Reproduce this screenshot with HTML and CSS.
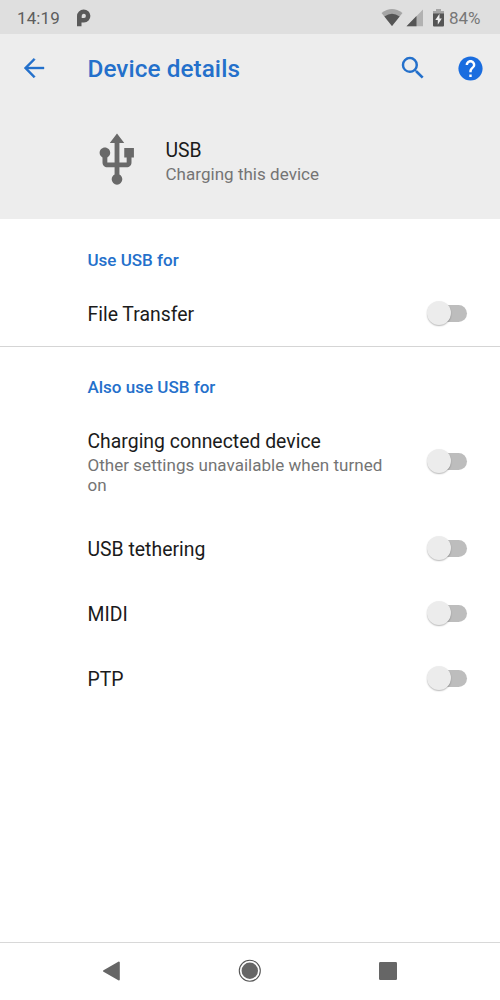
FILE: index.html
```
<!DOCTYPE html>
<html lang="en">
<head>
<meta charset="utf-8">
<title>Device details</title>
<link rel="stylesheet" href="styles.css">
</head>
<body>
<div class="screen">
  <div class="status">
    <span class="clock">14:19</span>
    <svg class="app-icon" width="14" height="18" viewBox="0 0 14 18"><path fill="#5a5a5a" fill-rule="evenodd" d="M0 17.3V7A6.700 6.500 0 1 1 7 13.500H4.500V17.300ZM4.700 9.100H7A2.100 2.200 0 1 0 4.700 7Z"/></svg>
    <div class="indicators">
      <svg class="wifi" width="22" height="18" viewBox="0 0 22 18"><path fill="#a5a5a5" d="M.5 4Q11-4 21.500 4L11 17Z"/><path fill="#555" d="M3.400 7.600Q11 2 18.600 7.600L11 17Z"/></svg>
      <svg class="signal" width="18" height="18" viewBox="0 0 18 18"><path fill="#b2b2b2" d="M.5 17.200 17 .5V17.200Z"/><path fill="#555" d="M.5 17.200 10.500 7.100V17.200Z"/></svg>
      <svg class="battery" width="11" height="18" viewBox="0 0 11 18"><path fill="#a5a5a5" d="M3 0H8V2H11V5H0V2H3Z"/><path fill="#555" d="M0 4.500H11V16.500Q11 17.500 10 17.500H1Q0 17.500 0 16.500Z"/><path fill="#eee" d="M6.500 4.800 2.300 11H4.800V15.800L8.800 9.400H6.500Z"/></svg>
      <span class="percent">84%</span>
    </div>
  </div>
  <header class="head">
    <div class="toolbar">
      <svg class="back" width="30" height="30" viewBox="0 0 24 24"><path fill="#2470cb" stroke="#2470cb" stroke-width=".3" d="M20 11.200H7.200l5.800-5.900-1.200-1.200L4 12l7.800 7.900 1.200-1.200-5.800-5.900H20z"/></svg>
      <h1 class="title">Device details</h1>
      <svg class="search" width="30" height="30" viewBox="0 0 24 24"><path fill="#2470cb" d="M15.500 14h-.79l-.28-.27A6.471 6.471 0 0 0 16 9.500 6.500 6.500 0 1 0 9.500 16c1.610 0 3.090-.59 4.230-1.570l.27.28v.79l5 4.990L20.490 19l-4.990-5zm-6 0C7.010 14 5 11.990 5 9.500S7.010 5 9.500 5 14 7.010 14 9.500 11.990 14 9.500 14z"/></svg>
      <svg class="help" width="29" height="29" viewBox="0 0 24 24"><path fill="#1a6ddf" d="M12 2C6.480 2 2 6.480 2 12s4.480 10 10 10 10-4.480 10-10S17.520 2 12 2z"/><path fill="#fff" d="M13 19h-2v-2h2v2zM15.070 11.250l-.9.920C13.450 12.900 13 13.500 13 15h-2v-.5c0-1.100.45-2.100 1.170-2.830l1.240-1.260c.37-.36.59-.86.59-1.410 0-1.100-.9-2-2-2s-2 .9-2 2H8c0-2.210 1.790-4 4-4s4 1.790 4 4c0 .88-.36 1.680-.93 2.250z"/></svg>
    </div>
    <div class="device">
      <svg class="usb" width="58" height="58" viewBox="0 0 24 24"><path fill="#696969" d="M15 7v4h1v2h-3V5h2l-3-4-3 4h2v8H8v-2.070c.7-.37 1.200-1.080 1.200-1.930 0-1.210-.99-2.200-2.200-2.200S4.800 7.790 4.800 9c0 .85.5 1.560 1.200 1.930V13c0 1.110.89 2 2 2h3v3.050c-.71.37-1.200 1.100-1.200 1.950a2.200 2.200 0 0 0 4.400 0c0-.85-.49-1.580-1.200-1.950V15h3c1.110 0 2-.89 2-2v-2h1V7h-4z"/></svg>
      <div class="device-text">
        <div class="name">USB</div>
        <div class="summary">Charging this device</div>
      </div>
    </div>
  </header>
  <main class="list">
    <section class="group divided">
      <h2 class="section">Use USB for</h2>
      <div class="row first"><div class="name">File Transfer</div><span class="switch"></span></div>
    </section>
    <section class="group">
      <h2 class="section">Also use USB for</h2>
      <div class="row tall"><div class="label"><div class="name">Charging connected device</div><div class="summary">Other settings unavailable when turned on</div></div><span class="switch"></span></div>
      <div class="row"><div class="name">USB tethering</div><span class="switch"></span></div>
      <div class="row"><div class="name">MIDI</div><span class="switch"></span></div>
      <div class="row"><div class="name">PTP</div><span class="switch"></span></div>
    </section>
  </main>
  <nav class="nav">
    <svg width="24" height="24" viewBox="0 0 24 24"><path fill="#666" stroke="#666" stroke-width="2" stroke-linejoin="round" d="M4 12 18.800 3.500V20.500Z"/></svg>
    <svg width="24" height="24" viewBox="0 0 24 24"><circle cx="11.800" cy="11.800" r="10.500" fill="#fff" stroke="#555" stroke-width="1.100"/><circle cx="11.800" cy="11.800" r="8.200" fill="#666"/></svg>
    <svg width="24" height="24" viewBox="0 0 24 24"><rect x="3" y="3" width="18" height="18" rx="1.200" fill="#666"/></svg>
  </nav>
</div>
</body>
</html>
```
FILE: styles.css
```
* { box-sizing: border-box; }
body { margin: 0; font-family: Roboto, "Liberation Sans", sans-serif; }
h1, h2 { margin: 0; font-weight: 500; }
svg { display: block; flex: none; }
.screen { width: 500px; height: 1000px; display: flex; flex-direction: column; background: #fff; overflow: hidden; }
.status { height: 34px; background: #dfdfdf; display: flex; align-items: center; padding: 1px 19.500px 0 17px; font-size: 17px; color: #5d5d5d; }
.clock { width: 60px; letter-spacing: .1px; }
.indicators { margin-left: auto; display: flex; align-items: center; }
.signal { margin-left: 3px; }
.battery { margin-left: 9px; }
.percent { margin-left: 5px; color: #777; }
.head { height: 185px; background: #ededed; }
.toolbar { height: 68px; display: flex; align-items: center; padding: 0 15px 0 19px; }
.title { margin-left: 38.500px; font-size: 24.300px; letter-spacing: .07px; color: #2470cb; white-space: nowrap; }
.search { margin-left: auto; }
.help { margin-left: 28.500px; }
.device { display: flex; align-items: center; padding: 29px 0 0 87.500px; }
.device-text { margin-left: 20px; padding-top: 1px; }
.name { font-size: 19.400px; line-height: 26px; color: #1b1b1b; white-space: nowrap; }
.summary { font-size: 17px; line-height: 20px; letter-spacing: .03px; color: #747474; }
.list { flex: 1; }
.divided { border-bottom: 1px solid #d5d5d5; }
.section { height: 62px; padding: 31px 0 0 87.500px; font-size: 17px; line-height: 20px; color: #2470cb; }
.group:last-child .section { height: 61px; padding-top: 30px; }
.row { height: 65px; padding: 1px 33px 0 87.500px; display: flex; align-items: center; justify-content: space-between; }
.first .name { padding-top: 2px; }
.tall { height: 109px; }
.label { width: 310px; padding-bottom: 2px; }
.switch { width: 36px; height: 17px; flex: none; border-radius: 9px; background: #bdbdbd; position: relative; top: -2px; }
.first .switch { top: -1px; }
.switch::before { content: ""; position: absolute; left: -4px; top: -4px; width: 24px; height: 24px; border-radius: 50%; background: #ececec; box-shadow: 0 1px 1.500px rgba(0,0,0,.28); }
.nav { height: 58px; border-top: 1px solid #d8d8d8; display: flex; align-items: center; justify-content: space-between; padding: 0 100px 1px; }
```
